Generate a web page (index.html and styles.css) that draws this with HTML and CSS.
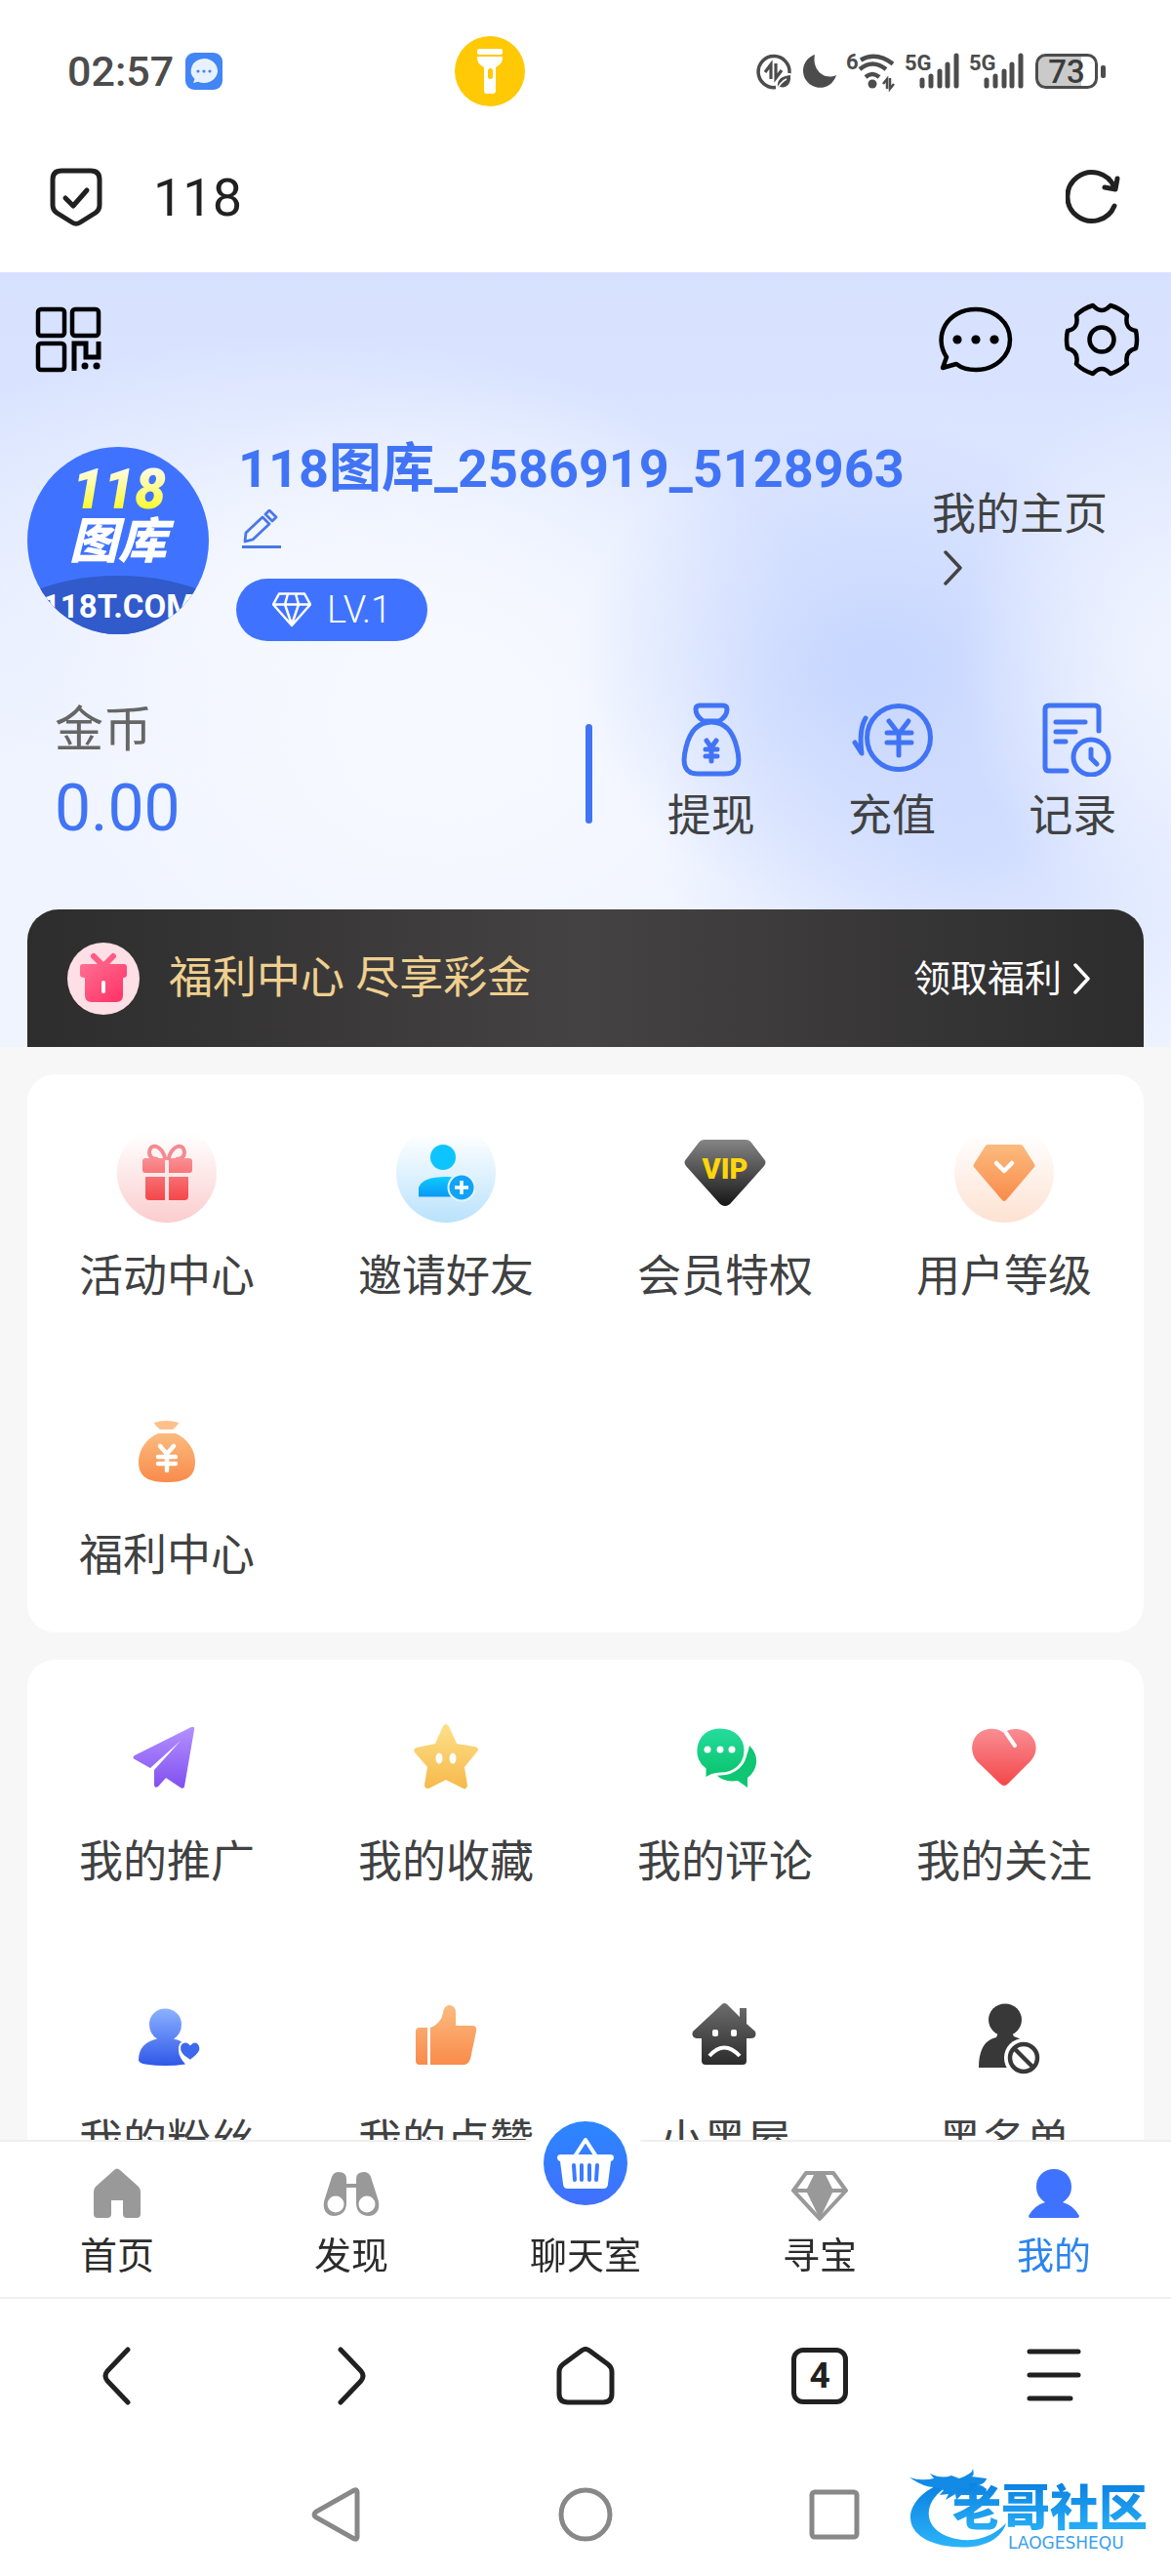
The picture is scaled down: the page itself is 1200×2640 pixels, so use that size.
FILE: index.html
```html
<!DOCTYPE html>
<html lang="zh-CN">
<head>
  <meta charset="UTF-8" />
  <meta name="viewport" content="width=device-width, initial-scale=1" />
  <title>118 - 我的</title>
  <link rel="stylesheet" href="styles.css">
</head>
<body>
  <!-- Degradados compartidos -->
  <svg class="defs" aria-hidden="true">
    <defs>
      <linearGradient id="gRed" x1="0" y1="0" x2="0" y2="1"><stop offset="0" stop-color="#f98e93"/><stop offset="1" stop-color="#f4474a"/></linearGradient>
      <linearGradient id="gCyan" x1="0" y1="0" x2="0" y2="1"><stop offset="0" stop-color="#0ccbff"/><stop offset="1" stop-color="#0b98f5"/></linearGradient>
      <linearGradient id="gOrange" x1="0" y1="0" x2="0" y2="1"><stop offset="0" stop-color="#fbbb7e"/><stop offset="1" stop-color="#f98b4b"/></linearGradient>
      <linearGradient id="gDark" x1="0" y1="0" x2="0" y2="1"><stop offset="0" stop-color="#858585"/><stop offset="1" stop-color="#161616"/></linearGradient>
      <linearGradient id="gHouse" x1="0" y1="0" x2="0" y2="1"><stop offset="0" stop-color="#6d6d6d"/><stop offset="1" stop-color="#2b2b2b"/></linearGradient>
      <linearGradient id="gPurple" x1="0" y1="0" x2="0" y2="1"><stop offset="0" stop-color="#b391ff"/><stop offset="1" stop-color="#8150f0"/></linearGradient>
      <linearGradient id="gGold" x1="0" y1="0" x2="0" y2="1"><stop offset="0" stop-color="#fde08a"/><stop offset="1" stop-color="#f6b94a"/></linearGradient>
      <linearGradient id="gGreen" x1="0" y1="0" x2="0" y2="1"><stop offset="0" stop-color="#27dc9f"/><stop offset="1" stop-color="#08c269"/></linearGradient>
      <linearGradient id="gBlue" x1="0" y1="0" x2="0" y2="1"><stop offset="0" stop-color="#8bb2ff"/><stop offset="1" stop-color="#2f57e8"/></linearGradient>
      <linearGradient id="gPink" x1="0" y1="0" x2="1" y2="1"><stop offset="0" stop-color="#ff6f92"/><stop offset="1" stop-color="#ff2f63"/></linearGradient>
      <linearGradient id="gLogo" x1="0" y1="0" x2="0" y2="1"><stop offset="0" stop-color="#0a7fe0"/><stop offset="1" stop-color="#2bb4f8"/></linearGradient>
      <linearGradient id="gYellow" x1="0" y1="0" x2="0" y2="1"><stop offset="0.2" stop-color="#fffde0"/><stop offset="0.8" stop-color="#fdfb2e"/></linearGradient>
      <linearGradient id="hRed" x1="0" y1="0" x2="0" y2="1"><stop offset="0.1" stop-color="#fff"/><stop offset="1" stop-color="#fbcdce"/></linearGradient>
      <linearGradient id="hCyan" x1="0" y1="0" x2="0" y2="1"><stop offset="0.1" stop-color="#fff"/><stop offset="1" stop-color="#b9e2fc"/></linearGradient>
      <linearGradient id="hOrange" x1="0" y1="0" x2="0" y2="1"><stop offset="0.1" stop-color="#fff"/><stop offset="1" stop-color="#fde2d2"/></linearGradient>
    </defs>
  </svg>

  <header class="status-bar">
    <div class="status-left">
      <span class="clock">02:57</span>
      <svg width="38" height="38" viewBox="0 0 38 38"><rect width="38" height="38" rx="9" fill="#4285f4"/><path d="M19 6a14 12.500 0 1 1-6 23.800L8 31l1.500-4A14 12.500 0 0 1 19 6z" fill="#e8f2fe"/><g fill="#4285f4"><circle cx="13" cy="19" r="1.600"/><circle cx="19" cy="19" r="1.600"/><circle cx="25" cy="19" r="1.600"/></g></svg>
    </div>
    <svg width="72" height="72" viewBox="0 0 72 72"><circle cx="36" cy="36" r="36" fill="#ffc905"/><g fill="#fff"><rect x="23" y="13" width="26" height="6" rx="2"/><path d="M23 21h26c0 6-2 8-7 11v24q0 3-3 3h-6q-3 0-3-3V32c-5-3-7-5-7-11z"/></g><rect x="34" y="33" width="5" height="11" rx="2.500" fill="#ffc905"/></svg>
    <div class="status-right">
      <svg width="36" height="38" viewBox="0 0 36 38" fill="none" stroke="#4c4c4c" stroke-width="3.500"><path d="M20 35.500A16 16 0 1 1 34 21"/><path d="M15 27V12l-6 8M20 11v15l6-8" stroke-width="3.200"/><path d="M22 36c-1-9 4-12 13-13 1 9-4 14-11 12z" fill="#4c4c4c" stroke="none"/><path d="M21 38q4-8 10-11" stroke="#fff" stroke-width="1.500"/></svg>
      <svg width="34" height="34" viewBox="0 0 34 34"><path d="M12 0A17.300 17.300 0 1 0 34 21C20 27 9 14 12 0z" fill="#4c4c4c"/></svg>
      <svg width="48" height="38" viewBox="0 0 48 38"><text x="-2" y="17" class="tiny">6</text><g fill="none" stroke="#4c4c4c" stroke-width="4.500"><path d="M13 7.500q16-9 33 4M12 17q13-11 27 0M18 25q7-6 14 0"/></g><circle cx="25" cy="32" r="4.500" fill="#4c4c4c"/><path d="M40 37V27l-4 5M43 26v11l4-5" fill="none" stroke="#4c4c4c" stroke-width="2.500"/></svg>
      <svg width="54" height="38" viewBox="0 0 54 38"><text x="-2" y="18" class="tiny">5G</text><path d="M16 28v6M25 24v10M34 19v15M42 12v22M51 3v31" stroke="#4c4c4c" stroke-width="5" stroke-linecap="round"/></svg>
      <svg width="54" height="38" viewBox="0 0 54 38"><text x="-2" y="18" class="tiny">5G</text><path d="M16 28v6M25 24v10M34 19v15M42 12v22M51 3v31" stroke="#4c4c4c" stroke-width="5" stroke-linecap="round"/></svg>
      <svg width="72" height="38" viewBox="0 0 72 38"><path d="M10 3h37v32H10q-8 0-8-8V11q0-8 8-8z" fill="#cacaca"/><rect x="1.500" y="2.500" width="61" height="33" rx="9" fill="none" stroke="#4c4c4c" stroke-width="3"/><rect x="67" y="13" width="5" height="13" rx="2" fill="#4c4c4c"/><text x="32" y="31" class="battery-text">73</text></svg>
    </div>
  </header>

  <div class="url-bar">
    <svg width="54" height="60" viewBox="0 0 54 60" fill="none" stroke="#212121" stroke-width="5" stroke-linecap="round" stroke-linejoin="round"><path d="M12 3h30q9 0 9 9v26q0 5-4 8L31 56q-4 2.500-8 0L7 46q-4-3-4-8V12q0-9 9-9z"/><path d="M16 31l8 8 14-16"/></svg>
    <input class="url-input" type="text" value="118" aria-label="地址栏">
    <button class="icon-btn" aria-label="刷新"><svg width="56" height="58" viewBox="0 0 56 58" fill="none" stroke="#212121" stroke-width="5" stroke-linecap="round" stroke-linejoin="round"><path d="M50 38A25 25 0 1 1 50 19"/><path d="M53 10l-2 11-11-2"/></svg></button>
  </div>

  <main class="content">
    <section class="hero">
      <div class="hero-top">
        <button class="icon-btn" aria-label="二维码"><svg width="68" height="68" viewBox="0 0 68 68" fill="none" stroke="#000" stroke-width="4.500"><rect x="3" y="3" width="27" height="27" rx="3"/><rect x="38" y="3" width="27" height="27" rx="3"/><rect x="3" y="38" width="27" height="27" rx="3"/><path d="M40 66V38h12v14h13V36" stroke-width="5"/><g fill="#000" stroke="none"><circle cx="51" cy="61" r="3.500"/><circle cx="63" cy="61" r="3.500"/></g></svg></button>
        <div class="hero-actions">
          <button class="icon-btn" aria-label="消息"><svg width="76" height="68" viewBox="0 0 76 68" fill="none" stroke="#000" stroke-width="4.500"><path d="M8 52C-6 31 8 3 38 3c20 0 35 14 35 31S58 65 38 65c-8 0-15-2-20-6L4 63z" stroke-linejoin="round"/><g fill="#000" stroke="none"><circle cx="19" cy="34" r="4.600"/><circle cx="38" cy="34" r="4.600"/><circle cx="57" cy="34" r="4.600"/></g></svg></button>
          <button class="icon-btn" aria-label="设置"><svg width="78" height="76" viewBox="0 0 78 76" fill="none" stroke="#000" stroke-width="4.500" stroke-linejoin="round"><path d="M30 3q9 10 18 0 10 3 17 10-3 14 9 16 2 9 0 18-12 3-9 16-7 7-17 10-9-10-18 0-10-3-17-10 3-13-9-16-2-9 0-18 12-2 9-16 7-7 17-10z"/><circle cx="39" cy="38" r="12.500"/></svg></button>
        </div>
      </div>

      <div class="profile">
        <svg class="avatar" viewBox="0 0 186 192" role="img" aria-label="118图库">
          <rect width="186" height="192" fill="#3f73ff"/>
          <ellipse cx="93" cy="200" rx="135" ry="68" fill="#315acb"/>
          <text x="94" y="63" class="avatar-num">118</text>
          <text x="93" y="114" class="avatar-name">图库</text>
          <text x="93" y="175" class="avatar-site">118T.COM</text>
        </svg>
        <div class="profile-info">
          <h1 class="nickname">118图库_2586919_5128963</h1>
          <button class="icon-btn edit" aria-label="编辑"><svg width="40" height="40" viewBox="0 0 40 40" fill="none" stroke="#4a77e8" stroke-width="2.800" stroke-linejoin="round"><path d="M4 24L21 8l7 7L11 31l-8 2zM24 5l4-4 7 7-4 4z"/><path d="M0 38.500h40"/></svg></button>
          <span class="level">
            <svg width="40" height="36" viewBox="0 0 40 36" fill="none" stroke="#fff" stroke-width="2.500" stroke-linejoin="round"><path d="M7 1.500h26l6 11L20 34 1 12.500zM1 12.500h38M16 1.500l-3 11L20 33l7-20.500-3-11"/></svg>
            LV.1
          </span>
        </div>
        <a class="home-link" href="#">我的主页
          <svg width="20" height="36" viewBox="0 0 20 36" fill="none" stroke="#444" stroke-width="3.500" stroke-linecap="round" stroke-linejoin="round"><path d="M2 2l15 16L2 34"/></svg>
        </a>
      </div>

      <div class="wallet">
        <div class="balance">
          <span class="balance-label">金币</span>
          <span class="balance-value">0.00</span>
        </div>
        <div class="divider"></div>
        <div class="wallet-actions">
          <a href="#"><svg width="84" height="76" viewBox="0 0 84 76" class="line-icon"><path d="M30 3h24q4 0 4 4 0 7-8 12H34q-8-5-8-12 0-4 4-4zM42 20c13 0 22 9 26 26 5 19 0 27-12 27H28c-12 0-17-8-12-27 4-17 13-26 26-26z"/><path d="M37 39l5 7 5-7M36 48h12M36 55h12M42 47v13"/></svg>提现</a>
          <a href="#"><svg width="84" height="76" viewBox="0 0 84 76" class="line-icon"><circle cx="49" cy="36" r="32.500"/><path d="M39 19l10 13 10-13M37 31h25M37 41h25M49 32v22M15 16Q8 28 11 52L4 41"/></svg>充值</a>
          <a href="#"><svg width="84" height="76" viewBox="0 0 84 76" class="line-icon"><path d="M36 70H18q-4 0-4-4V7q0-4 4-4h47q4 0 4 4v22M25 20h30M25 30h20M25 40h10"/><circle cx="61" cy="56" r="18"/><path d="M61 48v9l6 6"/></svg>记录</a>
        </div>
      </div>

      <a class="banner" href="#">
        <svg width="74" height="74" viewBox="0 0 74 74"><circle cx="37" cy="37" r="37" fill="#ffdfe6"/><path d="M27 14l10 10 10-10" fill="none" stroke="#ff5c83" stroke-width="6" stroke-linecap="round"/><path d="M16 22h42q3 0 3 3v8q0 3-4 3v18q0 7-7 7H25q-7 0-7-7V36q-5 0-5-3v-8q0-3 3-3z" fill="url(#gPink)"/><rect x="35" y="39" width="4" height="13" rx="2" fill="#fff"/></svg>
        <span class="banner-title">福利中心 尽享彩金</span>
        <span class="banner-more">领取福利
          <svg width="18" height="32" viewBox="0 0 18 32" fill="none" stroke="#fff" stroke-width="3.500" stroke-linecap="round" stroke-linejoin="round"><path d="M2 2l13 14L2 30"/></svg>
        </span>
      </a>
    </section>

    <nav class="card">
      <a class="item" href="#">
        <svg class="item-icon" viewBox="0 0 102 102"><circle cx="51" cy="51" r="51" fill="url(#hRed)"/><path d="M50 38C45 20 33 21 33 30q0 7 9 7M52 38c5-18 17-17 17-8q0 7-9 7" fill="none" stroke="#f48a8f" stroke-width="4"/><path d="M29 36h20v15H29q-3 0-3-3v-9q0-3 3-3zM53 36h21q3 0 3 3v9q0 3-3 3H53zM29 55h20v24H33q-4 0-4-4zM53 55h20v20q0 4-4 4H53z" fill="url(#gRed)"/></svg>
        活动中心
      </a>
      <a class="item" href="#">
        <svg class="item-icon" viewBox="0 0 102 102"><circle cx="51" cy="51" r="51" fill="url(#hCyan)"/><circle cx="48" cy="35" r="13" fill="#0dc4fe"/><path d="M23 75.500V66q4-11 28-11 10 0 14 3v17.500z" fill="url(#gCyan)"/><circle cx="67" cy="66" r="13.500" fill="#11a3f7" stroke="#e4f4fe" stroke-width="2"/><path d="M67 59v14M60 66h14" stroke="#fff" stroke-width="3.500"/></svg>
        邀请好友
      </a>
      <a class="item" href="#">
        <svg class="item-icon" viewBox="0 0 102 102"><path d="M30 17h42q4 0 6 3l13 17q3 3 0 7L56 83q-5 4-10 0L11 44q-3-4 0-7l13-17q2-3 6-3z" fill="url(#gDark)"/><text x="51" y="57" class="vip">VIP</text></svg>
        会员特权
      </a>
      <a class="item" href="#">
        <svg class="item-icon" viewBox="0 0 102 102"><circle cx="51" cy="51" r="51" fill="url(#hOrange)"/><path d="M35 22h32q2 0 3 1l12 19q1 2 0 3L53 79q-2 2-4 0L20 45q-1-1 0-3l12-19q1-1 3-1z" fill="url(#gOrange)"/><path d="M43 41l8 8 8-8" fill="none" stroke="#fff" stroke-width="4.500" stroke-linecap="round" stroke-linejoin="round"/></svg>
        用户等级
      </a>
      <a class="item" href="#">
        <svg class="item-icon" viewBox="0 0 102 102"><path d="M38 21q12-4 25 0 0 2-6 7H44q-6-5-6-7z" fill="#fcc18a"/><path d="M42 32h18c12 5 20 17 20 29 0 16-10 21-29 21s-29-5-29-21c0-12 8-24 20-29z" fill="url(#gOrange)"/><path d="M44 45l7 8 7-8M42 56h18M42 63h18M51 54v16" fill="none" stroke="#fff" stroke-width="4.500" stroke-linecap="round"/></svg>
        福利中心
      </a>
    </nav>

    <nav class="card">
      <a class="item" href="#">
        <svg class="item-icon" viewBox="0 0 102 102"><path d="M76 19q4-1 3 3L69 80q-1 3-4 1L50 71l-8 9q-4 2-4-2V63l27-30-31 28-16-9q-3-2 0-4z" fill="url(#gPurple)"/></svg>
        我的推广
      </a>
      <a class="item" href="#">
        <svg class="item-icon" viewBox="0 0 102 102"><path d="M48 18q3-4 6 0l8 18 19 3q5 2 2 5L70 60l3 19q-1 4-4 3L51 73 33 82q-4 0-4-4l3-18-13-15q-2-4 2-5l19-4z" fill="url(#gGold)"/><g fill="#fff"><ellipse cx="44" cy="51" rx="3.500" ry="5.500"/><ellipse cx="58" cy="51" rx="3.500" ry="5.500"/></g></svg>
        我的收藏
      </a>
      <a class="item" href="#">
        <svg class="item-icon" viewBox="0 0 102 102"><path d="M76 38q8 8 7 18-1 9-9 15v10l-10-7q-14 2-22-6 28 0 34-30z" fill="#0fc672"/><path d="M46 19c15 0 26 10 26 24S61 67 46 67c-6 0-11 2-16 6V62C14 51 19 19 46 19z" fill="url(#gGreen)" stroke="#fff" stroke-width="3"/><g fill="#fff"><circle cx="33" cy="42" r="3.500"/><circle cx="46" cy="42" r="3.500"/><circle cx="58" cy="42" r="3.500"/></g></svg>
        我的评论
      </a>
      <a class="item" href="#">
        <svg class="item-icon" viewBox="0 0 102 102"><path d="M51 25c6-6 20-5 27 2s8 18 0 27L55 77q-4 4-8 0L23 54c-7-9-6-20 0-27s20-9 28-2z" fill="url(#gRed)"/><path d="M53 25l9 13" stroke="#fff" stroke-width="4" stroke-linecap="round"/></svg>
        我的关注
      </a>
      <a class="item" href="#">
        <svg class="item-icon" viewBox="0 0 102 102"><path d="M49 21.500c10 0 17 7 17 16q0 10-8 15 6 1 9 4-9 9 3 22-20 3-41 0-6-1-7-4 0-18 19-22-8-5-8-15c0-9 7-16 16-16z" fill="url(#gBlue)"/><path d="M75 58q5-5 9 0 4 6-3 12l-6 5-7-5q-6-6-3-12 5-5 10 0z" fill="#3e68ee" stroke="#fff" stroke-width="2"/></svg>
        我的粉丝
      </a>
      <a class="item" href="#">
        <svg class="item-icon" viewBox="0 0 102 102"><path d="M24 41h8v38h-8q-4 0-4-4V45q0-4 4-4zM35 41q11-4 13-15 1-8 7-8 6 1 6 8v13h17q5 0 4 6l-6 28q-2 6-7 6H35z" fill="url(#gOrange)"/></svg>
        我的点赞
      </a>
      <a class="item" href="#">
        <svg class="item-icon" viewBox="0 0 102 102"><path d="M48 17q2-2 5 0l13 13v-9h7v16l9 8q2 7-5 7h-4v23q0 4-4 4H31q-4 0-4-4V52h-5q-6-1-4-7z" fill="url(#gHouse)"/><g fill="#fff"><rect x="38" y="43" width="6" height="7" rx="2"/><rect x="57" y="43" width="6" height="7" rx="2"/></g><path d="M35 70q15-17 31 0" fill="none" stroke="#fff" stroke-width="4"/></svg>
        小黑屋
      </a>
      <a class="item" href="#">
        <svg class="item-icon" viewBox="0 0 102 102"><ellipse cx="52" cy="33" rx="17" ry="16.500" fill="#383838"/><path d="M45 46h14l2 4q7 2 10 6-18 4-16 26H25q0-27 18-31z" fill="#383838"/><circle cx="71" cy="72" r="20" fill="#fff"/><circle cx="71" cy="72" r="14" fill="#fff" stroke="#383838" stroke-width="4.500"/><path d="M61 62l20 20" stroke="#383838" stroke-width="4.500"/></svg>
        黑名单
      </a>
    </nav>
  </main>

  <nav class="tab-bar">
    <a class="tab" href="#"><svg class="tab-icon" viewBox="0 0 60 60"><path d="M27 6q3-3 6 0l19 17q2 2 2 5v23q0 4-4 4H40q-4 0-4-4V37H24v14q0 4-4 4H10q-4 0-4-4V28q0-3 2-5z" fill="#999"/></svg>首页</a>
    <a class="tab" href="#"><svg class="tab-icon" viewBox="0 0 60 60"><path d="M17 8q8 0 8 7v5h10v-5q0-7 8-7 5 0 7 5l7 22c4 11-2 18-9 18-8 0-13-5-13-13V24H25v16c0 8-5 13-13 13-7 0-13-7-9-18l7-22q2-5 7-5z" fill="#999"/><circle cx="14" cy="41" r="8.500" fill="#fff"/><circle cx="46" cy="41" r="8.500" fill="#fff"/></svg>发现</a>
    <a class="tab" href="#"><span class="tab-round"><svg width="58" height="54" viewBox="0 0 58 54"><path d="M16 23L29 3l13 20" fill="none" stroke="#fff" stroke-width="4" stroke-linejoin="round"/><path d="M4 18h50q4 0 4 3t-3 4l-3 23q0 5-5 5H11q-5 0-5-5L3 25q-3-1-3-4t4-3z" fill="#fff"/><path d="M17 29l1 15M25 29v15M33 29v15M41 29l-1 15" stroke="#3b7bff" stroke-width="4" stroke-linecap="round"/></svg></span>聊天室</a>
    <a class="tab" href="#"><svg class="tab-icon" viewBox="0 0 60 60"><path d="M16 9h28l13 18-27 29L3 27z" fill="#fff" stroke="#999" stroke-width="4" stroke-linejoin="round"/><path d="M4 27h52" stroke="#999" stroke-width="4"/><path d="M25 9h10l9 18-14 29-14-29z" fill="#999"/></svg>寻宝</a>
    <a class="tab active" href="#"><svg class="tab-icon" viewBox="0 0 60 60"><path d="M30 5c11 0 18 8 18 18 0 7-3 12-9 16q11 3 17 14 0 2-2 2H6q-2 0-2-2 6-11 17-14c-6-4-9-9-9-16C12 13 19 5 30 5z" fill="#3f73ff"/></svg>我的</a>
  </nav>

  <div class="browser-bar">
    <button class="icon-btn" aria-label="后退"><svg width="60" height="60" viewBox="0 0 60 60" class="nav-icon"><path d="M41 3L20 25q-4 5 0 10l21 22"/></svg></button>
    <button class="icon-btn" aria-label="前进"><svg width="60" height="60" viewBox="0 0 60 60" class="nav-icon"><path d="M19 3l21 22q4 5 0 10L19 57"/></svg></button>
    <button class="icon-btn" aria-label="主页"><svg width="60" height="60" viewBox="0 0 60 60" class="nav-icon"><path d="M26 4q4-3 8 0l19 14q4 3 4 8v22q0 9-9 9H12q-9 0-9-9V26q0-5 4-8z"/></svg></button>
    <button class="tabs-count" aria-label="标签页">4</button>
    <button class="icon-btn" aria-label="菜单"><svg width="60" height="60" viewBox="0 0 60 60" class="nav-icon"><path d="M5 5h50M5 29h50M5 53h42"/></svg></button>
  </div>

  <div class="system-bar">
    <button class="icon-btn" aria-label="返回"><svg width="56" height="56" viewBox="0 0 56 56" class="sys-icon"><path d="M46 3q3-1 3 2v46q0 3-3 2L7 31q-4-3 0-6z"/></svg></button>
    <button class="icon-btn" aria-label="桌面"><svg width="56" height="56" viewBox="0 0 56 56" class="sys-icon"><circle cx="28" cy="28" r="25"/></svg></button>
    <button class="icon-btn" aria-label="最近任务"><svg width="56" height="56" viewBox="0 0 56 56" class="sys-icon"><rect x="5" y="5" width="46" height="46" rx="3"/></svg></button>
    <svg class="watermark" width="252" height="90" viewBox="0 0 252 90" role="img" aria-label="老哥社区">
      <path d="M36 14C-10 30-14 74 44 80c32 3 50-8 55-24-14 14-32 20-51 16C16 66 10 38 36 20z" fill="url(#gLogo)"/>
      <path d="M0 9q12 4 25 1l-4-5q12 6 22 2l8 3q14-5 14-10 2 8-2 8l16 2q-1 5-8 7 5 0 8 5-9-2-13 1l4 4q-12-4-16-1l-6 6-1-6-10 6 3-6-9 1 4-5-8-3q-11 1-27-10z" fill="#128ae6"/>
      <text x="44" y="58" class="logo-text">老哥社区</text>
      <text x="101" y="82" class="logo-sub">LAOGESHEQU</text>
    </svg>
  </div>
</body>
</html>
```
FILE: styles.css
```css
* {
  box-sizing: border-box;
}
body {
  margin: 0;
  height: 100vh;
  display: flex;
  flex-direction: column;
  font-family: Roboto, "Noto Sans CJK SC", sans-serif;
  font-size: 45px;
  color: #404142;
  background: #fff;
}
a {
  color: inherit;
  text-decoration: none;
}
button {
  font-family: inherit;
  background: none;
  border: none;
  padding: 0;
  cursor: pointer;
}
svg {
  display: block;
  flex-shrink: 0;
}
.defs {
  position: absolute;
  width: 0;
  height: 0;
}

/* Barra de estado */
.status-bar {
  display: flex;
  align-items: center;
  justify-content: space-between;
  flex-shrink: 0;
  height: 146px;
  padding: 0 67px 0 69px;
}
.status-bar svg {
  overflow: visible;
}
.status-left, .status-right {
  display: flex;
  align-items: center;
  gap: 12px;
}
.clock {
  font-size: 43px;
  font-weight: 500;
  color: #4c4c4c;
}
.tiny {
  font-size: 22px;
  font-weight: 700;
  fill: #4c4c4c;
}
.battery-text {
  font-size: 33px;
  font-weight: 500;
  text-anchor: middle;
  fill: #3c3c3c;
}

/* Barra de dirección */
.url-bar {
  display: flex;
  align-items: center;
  flex-shrink: 0;
  height: 133px;
  padding: 0 52px 21px 51px;
}
.url-input {
  flex: 1;
  min-width: 0;
  margin-left: 52px;
  padding: 0;
  border: none;
  outline: none;
  background: none;
  font-family: inherit;
  font-size: 54px;
  color: #212121;
}

.content {
  flex: 1;
  min-height: 0;
  overflow-y: auto;
  scrollbar-width: none;
  background: #f7f7f8;
}

/* Cabecera con perfil */
.hero {
  padding: 31px 28px 0;
  background:
    radial-gradient(ellipse 18% 36% at 100% 50%, #eff3ff 10%, rgba(239, 243, 255, 0) 100%),
    radial-gradient(ellipse 26% 32% at 75% 51%, #c8d7ff 10%, rgba(200, 215, 255, 0) 100%),
    radial-gradient(ellipse 28% 36% at 84% 72%, #d3dfff 10%, rgba(211, 223, 255, 0) 100%),
    radial-gradient(ellipse 34% 44% at 38% 58%, #f6f9ff 20%, rgba(246, 249, 255, 0) 100%),
    radial-gradient(ellipse 42% 36% at 26% 44%, #f1f5ff 20%, rgba(241, 245, 255, 0) 100%),
    linear-gradient(#d6e1ff, #dee7ff 35%, #f0f4ff 65%, #eff4ff);
}
.hero-top, .hero-actions {
  display: flex;
  align-items: center;
  justify-content: space-between;
}
.hero-top {
  padding: 0 4px 0 8px;
}
.hero-actions {
  gap: 52px;
}
.profile {
  display: flex;
  align-items: center;
  gap: 28px;
  margin-top: 64px;
}
.avatar {
  width: 186px;
  height: 192px;
  border-radius: 50%;
}
.avatar-num, .avatar-name, .avatar-site {
  text-anchor: middle;
  fill: #fff;
}
.avatar-num {
  font-size: 57px;
  font-weight: 900;
  font-style: italic;
  fill: url(#gYellow);
}
.avatar-name {
  font-size: 50px;
  font-weight: 900;
  font-style: italic;
}
.avatar-site {
  font-size: 33px;
  font-weight: 700;
}
.profile-info {
  flex: 1;
}
.nickname {
  margin: 0 0 0 2px;
  font-size: 54px;
  line-height: 62px;
  font-weight: 700;
  color: #4174f5;
  white-space: nowrap;
}
.edit {
  display: block;
  margin: 10px 6px 31px;
}
.level {
  display: inline-flex;
  align-items: center;
  justify-content: center;
  gap: 16px;
  width: 196px;
  height: 64px;
  border-radius: 32px;
  background: #3f73ff;
  color: #fff;
  font-size: 38px;
  font-weight: 300;
  vertical-align: top;
}
.home-link {
  display: flex;
  flex-direction: column;
  padding-right: 37px;
  line-height: 56px;
}
.home-link svg {
  margin: 8px 12px;
}

/* Saldo */
.wallet {
  display: flex;
  align-items: center;
  margin: 61px -28px 65px;
}
.balance {
  display: flex;
  flex-direction: column;
  flex: 0 0 50%;
  gap: 13px;
  padding-left: 56px;
}
.balance-label {
  font-size: 50px;
  line-height: 60px;
  color: #666;
}
.balance-value {
  font-size: 66px;
  line-height: 76px;
  color: #4174f5;
}
.divider {
  width: 7px;
  height: 102px;
  border-radius: 4px;
  background: #4174f5;
}
.wallet-actions {
  display: grid;
  flex: 1;
  grid-template-columns: repeat(3, 1fr);
  padding: 0 8px 0 29px;
}
.wallet-actions a {
  display: flex;
  flex-direction: column;
  align-items: center;
  gap: 12px;
  line-height: 58px;
}
.line-icon {
  fill: none;
  stroke: #4174f5;
  stroke-width: 5;
  stroke-linecap: round;
  stroke-linejoin: round;
}

.banner {
  display: flex;
  align-items: center;
  height: 141px;
  padding: 0 54px 0 41px;
  border-radius: 32px 32px 0 0;
  background: linear-gradient(90deg, #2d2d2d, #454243 50%, #2d2d2d);
  line-height: 60px;
}
.banner-title {
  flex: 1;
  margin-left: 30px;
  color: #efd08f;
}
.banner-more {
  display: flex;
  align-items: center;
  gap: 12px;
  font-size: 38px;
  color: #fff;
}

/* Tarjetas de menú */
.card {
  display: grid;
  grid-template-columns: repeat(4, 1fr);
  margin: 28px;
  border-radius: 28px;
  background: #fff;
}
.item {
  display: flex;
  flex-direction: column;
  align-items: center;
  gap: 26px;
  padding: 50px 0 48px;
  line-height: 60px;
}
.item-icon {
  width: 102px;
  height: 102px;
}
.vip {
  font-size: 29px;
  font-weight: 900;
  text-anchor: middle;
  fill: #ffd60a;
}

/* Navegación inferior */
.tab-bar {
  position: relative;
  display: grid;
  grid-template-columns: repeat(5, 1fr);
  flex-shrink: 0;
  border-top: 2px solid #eee;
  background: #fff;
}
.tab {
  display: flex;
  flex-direction: column;
  align-items: center;
  gap: 12px;
  padding: 23px 0 20px;
  font-size: 38px;
  line-height: 44px;
  color: #2b2b2b;
}
.tab.active {
  color: #2b85ee;
}
.tab-icon {
  width: 60px;
  height: 60px;
}
.tab-round {
  display: flex;
  align-items: center;
  justify-content: center;
  width: 86px;
  height: 86px;
  margin: -44px 0 18px;
  border-radius: 50%;
  background: linear-gradient(#2b86ff, #4070ff);
  box-shadow: 0 0 0 18px #fff;
}
.browser-bar {
  display: grid;
  grid-template-columns: repeat(5, 1fr);
  align-items: center;
  justify-items: center;
  flex-shrink: 0;
  height: 160px;
  border-top: 2px solid #f0f0f0;
}
.nav-icon {
  fill: none;
  stroke: #212121;
  stroke-width: 5;
  stroke-linecap: round;
  stroke-linejoin: round;
}
.tabs-count {
  width: 58px;
  height: 58px;
  border: 5px solid #212121;
  border-radius: 12px;
  font-size: 37px;
  font-weight: 700;
  line-height: 44px;
  color: #212121;
}
.system-bar {
  position: relative;
  display: flex;
  align-items: center;
  justify-content: center;
  gap: 199px;
  flex-shrink: 0;
  height: 126px;
}
.sys-icon {
  fill: none;
  stroke: #888;
  stroke-width: 5;
}

/* Marca de agua */
.watermark {
  position: absolute;
  right: 16px;
  bottom: 20px;
}
.logo-text {
  font-size: 50px;
  font-weight: 900;
  fill: url(#gLogo);
}
.logo-sub {
  font-family: "DejaVu Sans", sans-serif;
  font-size: 17px;
  fill: #3aa0ee;
}
```
